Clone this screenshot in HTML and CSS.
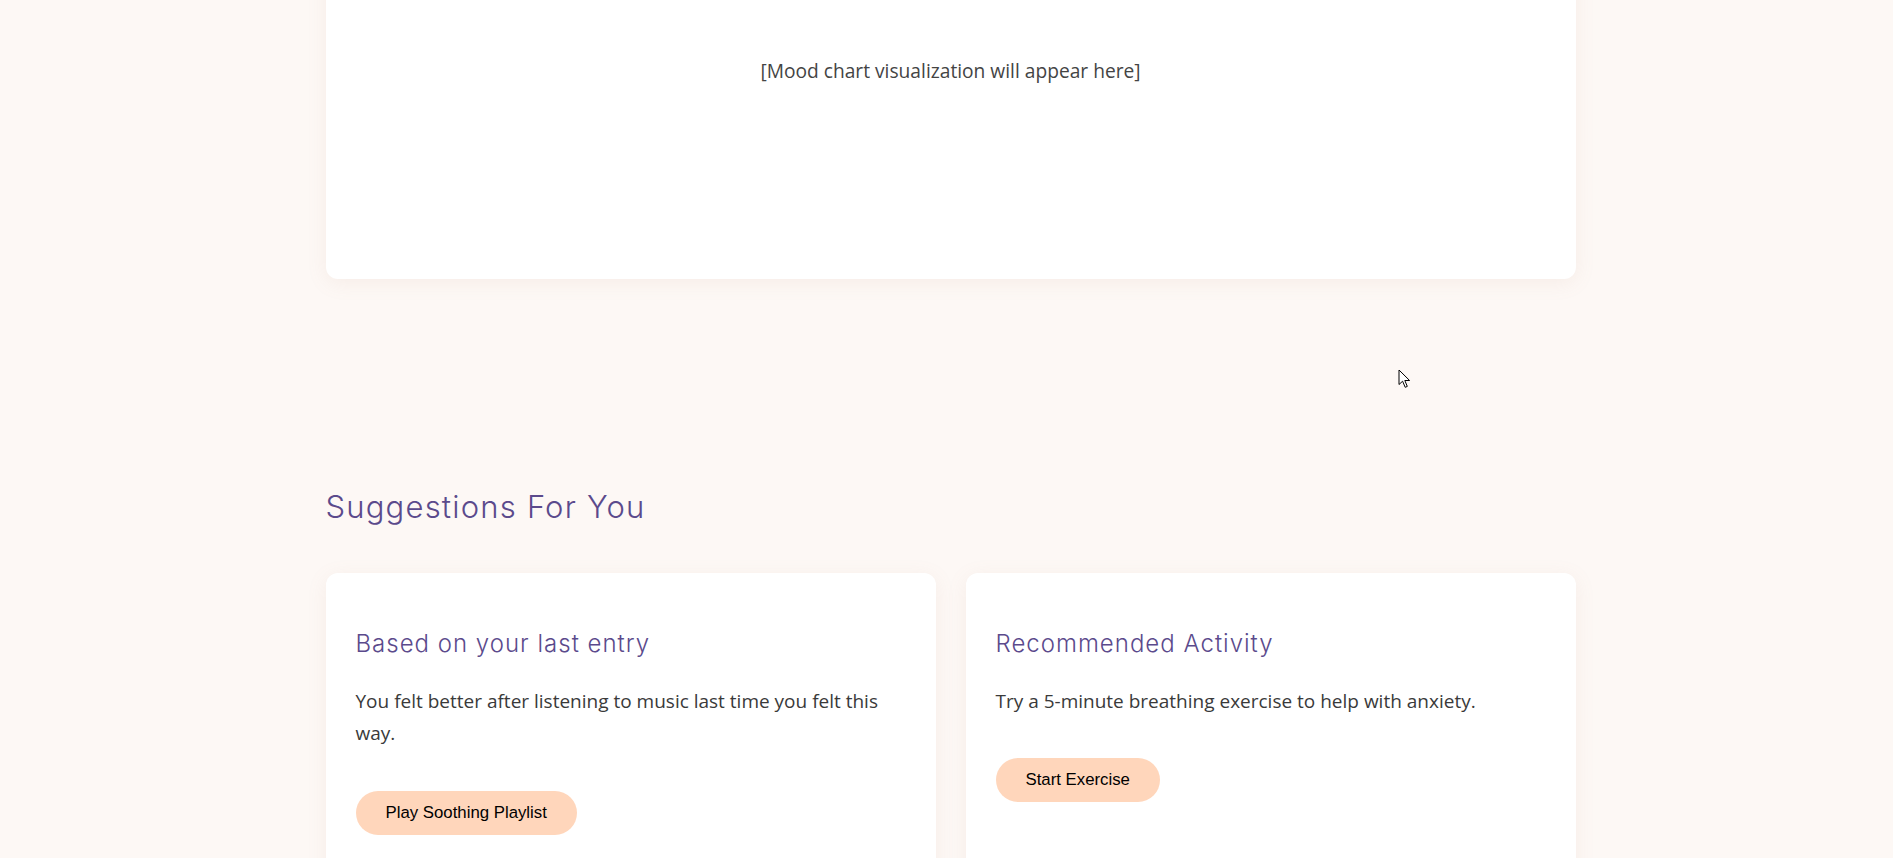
FILE: index.html
```html
<!DOCTYPE html>
<html lang="en">
<head>
<meta charset="utf-8">
<title>Mood Journal</title>
<link rel="stylesheet" href="styles.css">
</head>
<body>
<main class="page">
  <section class="chart-section">
    <div class="chart-card">
      <p class="chart-placeholder">[Mood chart visualization will appear here]</p>
    </div>
  </section>

  <section class="suggestions">
    <h2 class="section-title">Suggestions For You</h2>
    <div class="suggestion-grid">
      <article class="suggestion-card">
        <h3 class="card-title">Based on your last entry</h3>
        <p class="card-text">You felt better after listening to music last time you felt this way.</p>
        <button class="soft-btn" type="button">Play Soothing Playlist</button>
      </article>
      <article class="suggestion-card">
        <h3 class="card-title">Recommended Activity</h3>
        <p class="card-text">Try a 5-minute breathing exercise to help with anxiety.</p>
        <button class="soft-btn" type="button">Start Exercise</button>
      </article>
    </div>
  </section>
</main>
<svg class="cursor" width="14" height="20" viewBox="0 0 14 20" aria-hidden="true">
  <path d="M1 1 L1 15.5 L4.6 12.2 L7.2 18.3 L9.3 17.4 L6.8 11.5 L11.6 11.5 Z" fill="#fff" stroke="#000" stroke-width="1" stroke-linejoin="miter"/>
</svg>
</body>
</html>
```

FILE: styles.css
```css
html, body {
  margin: 0;
  padding: 0;
}

body {
  background: #fdf8f5;
  font-family: "Open Sans", "Noto Sans", sans-serif;
  color: #3a3a3a;
  overflow: hidden;
}

.page {
  width: 1250px;
  margin-left: calc(50% - 621px);
}

.chart-card {
  margin-top: -60px;
  height: 339px;
  box-sizing: border-box;
  padding: 117px 30px 30px;
  background: #ffffff;
  border-radius: 12px;
  box-shadow: 0 4px 20px rgba(190, 140, 120, 0.10);
  text-align: center;
}

.chart-placeholder {
  margin: 0;
  font-size: 19.2px;
  line-height: 28px;
  color: #444;
}

.suggestions {
  padding-top: 210px;
}

.section-title {
  margin: 0 0 48px;
  font-family: "Inter", "Noto Sans", sans-serif;
  font-weight: 300;
  font-size: 31px;
  letter-spacing: 1.2px;
  line-height: 36px;
  color: #5b4a8c;
}

.suggestion-grid {
  display: grid;
  grid-template-columns: 1fr 1fr;
  gap: 30px;
}

.suggestion-card {
  background: #ffffff;
  border-radius: 12px;
  box-shadow: 0 4px 20px rgba(190, 140, 120, 0.10);
  padding: 30px 30px 120px;
}

.card-title {
  margin: 27px 0 0;
  font-family: "Inter", "Noto Sans", sans-serif;
  font-weight: 300;
  font-size: 24px;
  letter-spacing: 1px;
  line-height: 28px;
  color: #5b4a8c;
}

.card-text {
  margin: 27px 0 41px;
  font-size: 19px;
  line-height: 32.4px;
  color: #3a3a3a;
}

.soft-btn {
  display: inline-block;
  border: none;
  border-radius: 50px;
  background: #ffd6bb;
  color: #000;
  font-family: "Liberation Sans", Arial, sans-serif;
  font-size: 1.05rem;
  padding: 12px 30px;
  cursor: pointer;
}

.cursor {
  position: absolute;
  left: 1398px;
  top: 369px;
}
```
